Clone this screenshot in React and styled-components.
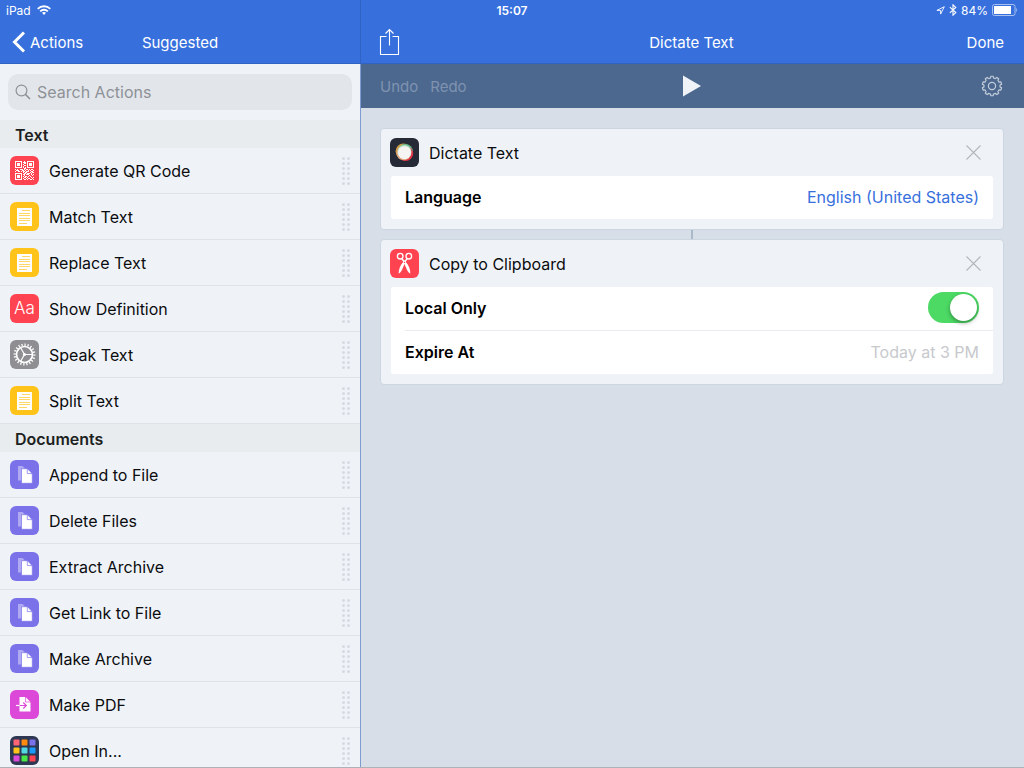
import React, { useState } from "react";
import styled, { createGlobalStyle } from "styled-components";

const GlobalStyle = createGlobalStyle`
  * {
    box-sizing: border-box;
  }

  body {
    margin: 0;
    padding: 0;
    overflow: hidden;
    font-family: Inter, "Liberation Sans", sans-serif;
    font-size: 16px;
    color: #0b0c0e;
  }

  button, input, select {
    font: inherit;
    color: inherit;
    margin: 0;
    padding: 0;
    border: none;
    background: none;
    outline: none;
  }

  svg {
    display: block;
    flex-shrink: 0;
  }
`;

const Page = styled.div`
  display: flex;
  height: 100vh;
  background-color: #d7dee8;
  border-bottom: 1px solid #adb2b9;
`;

const StatusBar = styled.div`
  position: absolute;
  top: 0;
  left: 0;
  right: 0;
  height: 20px;
  padding: 0 6px;
  display: grid;
  grid-template-columns: 1fr auto 1fr;
  align-items: center;
  color: white;
  font-size: 12px;
`;

const StatusGroup = styled.div`
  display: flex;
  align-items: center;
  gap: ${(props) => (props.$end ? "4px" : "6px")};
  justify-content: ${(props) => (props.$end ? "flex-end" : "flex-start")};
`;

const Clock = styled.time`
  font-weight: 600;
`;

const Sidebar = styled.aside`
  width: 360px;
  flex-shrink: 0;
  display: flex;
  flex-direction: column;
  background-color: #eff3f8;
`;

const Main = styled.main`
  flex: 1;
  min-width: 0;
  display: flex;
  flex-direction: column;
  border-left: 1px solid #7e9bd2;
`;

const NavBar = styled.header`
  height: 64px;
  flex-shrink: 0;
  padding: ${(props) => (props.$main ? "21px 20px 0 18px" : "21px 12px 0")};
  display: grid;
  grid-template-columns: 1fr auto 1fr;
  align-items: center;
  background-color: #3770dd;
  border-bottom: 1px solid #3063c4;
  color: white;
  font-size: 15px;
  box-shadow: ${(props) => (props.$main ? "-1px 0 0 #3063c4" : "none")};
`;

const NavTitle = styled.h1`
  margin: 0;
  font-size: 15px;
  font-weight: 400;
`;

const NavButton = styled.button`
  display: flex;
  align-items: center;
  gap: 4px;
  justify-self: ${(props) => (props.$end ? "end" : "start")};
  cursor: pointer;
`;

const SearchArea = styled.form`
  padding: 10px 8px;
  flex-shrink: 0;
`;

const SearchField = styled.label`
  height: 36px;
  padding: 0 7px;
  display: flex;
  align-items: center;
  gap: 6px;
  border-radius: 10px;
  background-color: #e2e6eb;
  color: #8e9196;
`;

const SearchInput = styled.input`
  flex: 1;
  min-width: 0;

  &::placeholder {
    color: #8e9196;
    opacity: 1;
  }
`;

const ActionScroll = styled.div`
  flex: 1;
  min-height: 0;
  overflow: hidden;
`;

const SectionTitle = styled.h2`
  margin: 0;
  padding: 0 15px;
  height: 28px;
  line-height: 30px;
  background-color: #e8ecef;
  color: #1d1f21;
  font-size: 16px;
  font-weight: 600;
`;

const ActionList = styled.ul`
  list-style: none;
  margin: 0;
  padding: 0;
`;

const ActionItem = styled.li`
  border-bottom: 1px solid #dfe3e8;
`;

const ActionButton = styled.button`
  width: 100%;
  height: 45px;
  padding: 0 10px;
  display: flex;
  align-items: center;
  gap: 10px;
  text-align: left;
  cursor: pointer;
`;

const ActionName = styled.span`
  flex: 1;
`;

const Toolbar = styled.div`
  height: 44px;
  flex-shrink: 0;
  padding: 0 21px 0 19px;
  display: grid;
  grid-template-columns: 1fr auto 1fr;
  align-items: center;
  background-color: #4c688f;
  font-size: 15px;
`;

const HistoryButtons = styled.div`
  display: flex;
  gap: 12px;
`;

const HistoryButton = styled.button`
  color: #7f93b0;
`;

const ToolButton = styled.button`
  justify-self: ${(props) => (props.$end ? "end" : "center")};
  cursor: pointer;
`;

const Canvas = styled.div`
  flex: 1;
  padding: 20px 20px 20px 19px;
  display: flex;
  flex-direction: column;
`;

const Card = styled.section`
  border: 1px solid #ccd6e0;
  border-radius: 4px;
  background-color: #eff3f8;
  padding-bottom: 10px;
`;

const CardHeader = styled.div`
  height: 47px;
  padding: 0 22px 0 9px;
  display: flex;
  align-items: center;
  gap: 10px;
`;

const CardTitle = styled.h2`
  flex: 1;
  margin: 0;
  font-size: 16px;
  font-weight: 400;
`;

const CloseButton = styled.button`
  cursor: pointer;
`;

const Connector = styled.div`
  width: 2px;
  height: 9px;
  align-self: center;
  background-color: #a9b9ca;
`;

const Params = styled.div`
  margin: 0 10px;
  border-radius: 3px;
  background-color: white;
  padding-left: 14px;
`;

const ParamRow = styled.div`
  height: 43px;
  padding: 0 14px 2px 0;
  display: flex;
  align-items: center;
  justify-content: space-between;

  & + & {
    height: 44px;
    border-top: 1px solid #e9ecef;
  }
`;

const ParamLabel = styled.label`
  font-weight: 600;
  color: black;
`;

const ParamSelect = styled.select`
  appearance: none;
  color: #3770dd;
  text-align: right;
  text-align-last: right;
  cursor: pointer;
`;

const ParamInput = styled.input`
  flex: 1;
  min-width: 0;
  text-align: right;

  &::placeholder {
    color: #c7c9cd;
    opacity: 1;
  }
`;

const Switch = styled.input`
  appearance: none;
  width: 51px;
  height: 31px;
  padding: 2px;
  border-radius: 16px;
  display: flex;
  justify-content: flex-start;
  background-color: #d9dce0;
  cursor: pointer;

  &::before {
    content: "";
    width: 27px;
    height: 27px;
    border-radius: 50%;
    background-color: white;
    box-shadow: 0 2px 4px rgba(0, 0, 0, 0.35);
  }

  &:checked {
    justify-content: flex-end;
    background-color: #4cd964;
  }
`;

const Tile = ({ fill, children }) => (
  <svg width="29" height="29" viewBox="0 0 29 29" aria-hidden="true">
    <rect width="29" height="29" rx="6" fill={fill} />
    {children}
  </svg>
);

const QR_ROWS = [
  "1111111001001111111",
  "1000001011101000001",
  "1011101001101011101",
  "1011101010001011101",
  "1011101001101011101",
  "1000001010001000001",
  "1111111010101111111",
  "0000000001100000000",
  "1010011101011010110",
  "0111000110100101001",
  "1001101011011100110",
  "0000000010110001011",
  "1111111001101110100",
  "1000001011011100101",
  "1011101001000010010",
  "1011101010110101000",
  "1011101001101000101",
  "1000001010010110010",
  "1111111001101001101",
];

const QrIcon = () => {
  const path = QR_ROWS.map((row, y) =>
    row
      .split("")
      .map((cell, x) => (cell === "1" ? `M${x} ${y}h1v1h-1z` : ""))
      .join("")
  ).join("");

  return (
    <Tile fill="#ff4351">
      <path d={path} fill="white" transform="translate(5 5)" />
    </Tile>
  );
};

const TextIcon = () => (
  <Tile fill="#ffc31a">
    <path d="M7 6h15v18H7z" fill="white" />
    <path
      d="M12 8.500h8M9 11.500h11M9 13.500h11M9 16.500h11M9 18.500h11M9 21.500h8"
      stroke="#ffd667"
      strokeWidth="1"
    />
  </Tile>
);

const DefinitionIcon = () => (
  <Tile fill="#ff4351">
    <text
      x="14.5"
      y="20"
      textAnchor="middle"
      fill="white"
      fontFamily="Inter, sans-serif"
      fontSize="17"
      fontWeight="300"
    >
      Aa
    </text>
  </Tile>
);

const SpeakIcon = () => (
  <Tile fill="#8e8e93">
    <g fill="none" stroke="white">
      <circle cx="14.5" cy="14.5" r="8" strokeWidth="1.7" />
      <circle
        cx="14.5"
        cy="14.5"
        r="9.8"
        strokeWidth="2.4"
        pathLength="40"
        strokeDasharray="0.8 1.2"
      />
      <path d="M14.5 14.5h8M14.5 14.5l-4 -7M14.5 14.5l-4 7" strokeWidth="1.2" />
    </g>
    <circle cx="14.5" cy="14.5" r="1.6" fill="white" />
  </Tile>
);

const FileIcon = () => (
  <Tile fill="#7b72e9">
    <path d="M8 6h4.500l5 5v9.500H8z" fill="#b0aaf2" />
    <path d="M11.500 8.700h6l4.800 5v9.600h-10.800z" fill="white" stroke="#7b72e9" strokeWidth="0.7" />
    <path d="M17.300 9v4.600h4.700" fill="none" stroke="#7b72e9" strokeWidth="0.7" />
  </Tile>
);

const PdfIcon = () => (
  <Tile fill="#dc48d8">
    <path d="M9.500 7h6l5 5v9.500h-11z" fill="white" />
    <path d="M15.500 6.800v5.200h5.200" fill="none" stroke="#dc48d8" strokeWidth="0.7" />
    <path d="M9.500 15.500h7M13.300 12.500l3 3l-3 3" fill="none" stroke="#dc48d8" strokeWidth="1.200" />
    <path d="M6 15.500h3.500" stroke="white" strokeWidth="1.200" />
  </Tile>
);

const GRID_COLORS = [
  "#ff6376", "#ff8a0d", "#7b72e9",
  "#ffc31a", "#53d7e0", "#1a9bfc",
  "#dc48d8", "#46e646", "#ff4351",
];

const OpenInIcon = () => (
  <Tile fill="#2e3852">
    {GRID_COLORS.map((color, i) => (
      <rect
        key={color}
        x={3.5 + (i % 3) * 8}
        y={3.5 + Math.floor(i / 3) * 8}
        width="6"
        height="6"
        rx="1"
        fill={color}
      />
    ))}
  </Tile>
);

const DictateIcon = () => (
  <Tile fill="#262a37">
    <circle cx="13.400" cy="13.300" r="7.800" fill="#cf9c43" />
    <circle cx="15.400" cy="13.600" r="7.600" fill="#5fb98a" />
    <circle cx="15.600" cy="15.500" r="7.600" fill="#e23349" />
    <circle cx="13.700" cy="15" r="7.300" fill="#e3a47c" />
    <circle cx="14.500" cy="13.900" r="7" fill="#b9e2c6" />
    <circle cx="14.500" cy="14.700" r="6.500" fill="#f6f4f2" />
  </Tile>
);

const ScissorsIcon = () => (
  <Tile fill="#ff4351">
    <g fill="none" stroke="white" strokeWidth="1.3">
      <circle cx="10.2" cy="7.2" r="2.800" />
      <circle cx="18.800" cy="7.2" r="2.800" />
    </g>
    <path
      d="M11.200 10L12.300 9.200L15.600 12.800C18.500 16 20.600 20.500 20.300 24.700C17.900 23.300 17 21 16.100 18.700L13.800 13.500z"
      fill="white"
    />
    <path
      d="M17.800 10L16.700 9.200L13.400 12.800C10.500 16 8.400 20.500 8.700 24.700C11.100 23.300 12 21 12.900 18.700L15.200 13.500z"
      fill="white"
    />
    <circle cx="14.5" cy="13.4" r="0.6" fill="#ff4351" />
  </Tile>
);

const DragHandle = () => (
  <svg width="8" height="28" viewBox="0 0 8 28" fill="#d5dae3" aria-hidden="true">
    {[0, 1, 2, 3, 4, 5].map((row) => (
      <g key={row}>
        <circle cx="1.5" cy={1.5 + row * 5} r="1.5" />
        <circle cx="6.5" cy={1.5 + row * 5} r="1.5" />
      </g>
    ))}
  </svg>
);

const CloseIcon = () => (
  <svg width="15" height="15" viewBox="0 0 15 15" aria-hidden="true">
    <path d="M0.500 0.500l14 14M14.500 0.500l-14 14" stroke="#b3b6ba" strokeWidth="1.1" />
  </svg>
);

// outline of a cog with ten teeth
const cogPath = () => {
  const points = [];
  for (let i = 0; i < 10; i++) {
    [
      [-11, 8.1],
      [-7, 9.8],
      [7, 9.8],
      [11, 8.1],
    ].forEach(([offset, radius]) => {
      const angle = ((i * 36 + offset - 90) * Math.PI) / 180;
      points.push(
        `${(11 + radius * Math.cos(angle)).toFixed(2)} ${(11 + radius * Math.sin(angle)).toFixed(2)}`
      );
    });
  }
  return `M${points.join("L")}Z`;
};

const CogIcon = () => (
  <svg width="22" height="22" viewBox="0 0 22 22" fill="none" stroke="#c3cddb" strokeWidth="1.2">
    <path d={cogPath()} strokeLinejoin="round" />
    <circle cx="11" cy="11" r="3.600" />
  </svg>
);

const SECTIONS = [
  {
    title: "Text",
    actions: [
      { name: "Generate QR Code", Icon: QrIcon },
      { name: "Match Text", Icon: TextIcon },
      { name: "Replace Text", Icon: TextIcon },
      { name: "Show Definition", Icon: DefinitionIcon },
      { name: "Speak Text", Icon: SpeakIcon },
      { name: "Split Text", Icon: TextIcon },
    ],
  },
  {
    title: "Documents",
    actions: [
      { name: "Append to File", Icon: FileIcon },
      { name: "Delete Files", Icon: FileIcon },
      { name: "Extract Archive", Icon: FileIcon },
      { name: "Get Link to File", Icon: FileIcon },
      { name: "Make Archive", Icon: FileIcon },
      { name: "Make PDF", Icon: PdfIcon },
      { name: "Open In...", Icon: OpenInIcon },
    ],
  },
];

const App = () => {
  const [search, setSearch] = useState("");
  const [localOnly, setLocalOnly] = useState(true);
  const [expireAt, setExpireAt] = useState("");

  return (
    <Page>
      <GlobalStyle />
      <Sidebar>
        <NavBar>
          <NavButton>
            <svg width="14" height="22" viewBox="0 0 14 22" fill="none" stroke="white" strokeWidth="3">
              <path d="M12 1.500L2.500 11L12 20.500" />
            </svg>
            Actions
          </NavButton>
          <NavTitle>Suggested</NavTitle>
        </NavBar>
        <SearchArea>
          <SearchField>
            <svg width="16" height="16" viewBox="0 0 16 16" fill="none" stroke="#8e9196" strokeWidth="1.2">
              <circle cx="6.500" cy="6.500" r="5.400" />
              <path d="M10.400 10.400l4.600 4.600" strokeWidth="1.500" />
            </svg>
            <SearchInput
              type="text"
              aria-label="Search Actions"
              placeholder="Search Actions"
              value={search}
              onChange={(e) => setSearch(e.target.value)}
            />
          </SearchField>
        </SearchArea>
        <ActionScroll>
          {SECTIONS.map(({ title, actions }) => (
            <section key={title}>
              <SectionTitle>{title}</SectionTitle>
              <ActionList>
                {actions.map(({ name, Icon }) => (
                  <ActionItem key={name}>
                    <ActionButton>
                      <Icon />
                      <ActionName>{name}</ActionName>
                      <DragHandle />
                    </ActionButton>
                  </ActionItem>
                ))}
              </ActionList>
            </section>
          ))}
        </ActionScroll>
      </Sidebar>

      <Main>
        <NavBar $main>
          <NavButton aria-label="Share">
            <svg width="21" height="28" viewBox="0 0 21 28" fill="none" stroke="white" strokeWidth="1.1">
              <path d="M7.500 8.500H1.500v18h18v-18H13.500" />
              <path d="M10.500 17.500V1.500M6.500 5.500l4-4l4 4" />
            </svg>
          </NavButton>
          <NavTitle>Dictate Text</NavTitle>
          <NavButton $end>Done</NavButton>
        </NavBar>
        <Toolbar>
          <HistoryButtons>
            <HistoryButton>Undo</HistoryButton>
            <HistoryButton>Redo</HistoryButton>
          </HistoryButtons>
          <ToolButton aria-label="Run">
            <svg width="18" height="22" viewBox="0 0 18 22" fill="#eff3f8">
              <path d="M0 0.500L18 11L0 21.500z" />
            </svg>
          </ToolButton>
          <ToolButton $end aria-label="Settings">
            <CogIcon />
          </ToolButton>
        </Toolbar>
        <Canvas>
          <Card>
            <CardHeader>
              <DictateIcon />
              <CardTitle>Dictate Text</CardTitle>
              <CloseButton aria-label="Remove Dictate Text">
                <CloseIcon />
              </CloseButton>
            </CardHeader>
            <Params>
              <ParamRow>
                <ParamLabel htmlFor="language">Language</ParamLabel>
                <ParamSelect id="language">
                  <option>English (United States)</option>
                </ParamSelect>
              </ParamRow>
            </Params>
          </Card>
          <Connector />
          <Card>
            <CardHeader>
              <ScissorsIcon />
              <CardTitle>Copy to Clipboard</CardTitle>
              <CloseButton aria-label="Remove Copy to Clipboard">
                <CloseIcon />
              </CloseButton>
            </CardHeader>
            <Params>
              <ParamRow>
                <ParamLabel htmlFor="local-only">Local Only</ParamLabel>
                <Switch
                  id="local-only"
                  type="checkbox"
                  role="switch"
                  checked={localOnly}
                  onChange={(e) => setLocalOnly(e.target.checked)}
                />
              </ParamRow>
              <ParamRow>
                <ParamLabel htmlFor="expire-at">Expire At</ParamLabel>
                <ParamInput
                  id="expire-at"
                  type="text"
                  placeholder="Today at 3 PM"
                  value={expireAt}
                  onChange={(e) => setExpireAt(e.target.value)}
                />
              </ParamRow>
            </Params>
          </Card>
        </Canvas>
      </Main>

      <StatusBar>
        <StatusGroup>
          iPad
          <svg width="14" height="10" viewBox="0 0 14 10" fill="none" stroke="white" strokeWidth="1.800">
            <path d="M0.700 3.800a9 9 0 0 1 12.600 0" />
            <path d="M3.200 6.300a5.400 5.400 0 0 1 7.600 0" />
            <path d="M7 10l-2-2.200a3 3 0 0 1 4 0z" fill="white" stroke="none" />
          </svg>
        </StatusGroup>
        <Clock>15:07</Clock>
        <StatusGroup $end>
          <svg width="9" height="9" viewBox="0 0 9 9" fill="none" stroke="white" strokeWidth="0.900">
            <path d="M8.300 0.700L0.900 4.400H4.600V8.100z" />
          </svg>
          <svg width="8" height="12" viewBox="0 0 8 12" fill="none" stroke="white" strokeWidth="1.100">
            <path d="M0.800 3.200l6 5.400L4 11.200V0.800L6.800 3.400L0.800 8.800" />
          </svg>
          84%
          <svg width="26" height="12" viewBox="0 0 26 12">
            <rect x="0.500" y="0.500" width="22.500" height="11" rx="2" fill="none" stroke="#a9c1f0" />
            <rect x="2" y="2" width="17" height="8" fill="white" />
            <path d="M24.300 4c1.200.8 1.200 3.200 0 4z" fill="#a9c1f0" />
          </svg>
        </StatusGroup>
      </StatusBar>
    </Page>
  );
};

export default App;
